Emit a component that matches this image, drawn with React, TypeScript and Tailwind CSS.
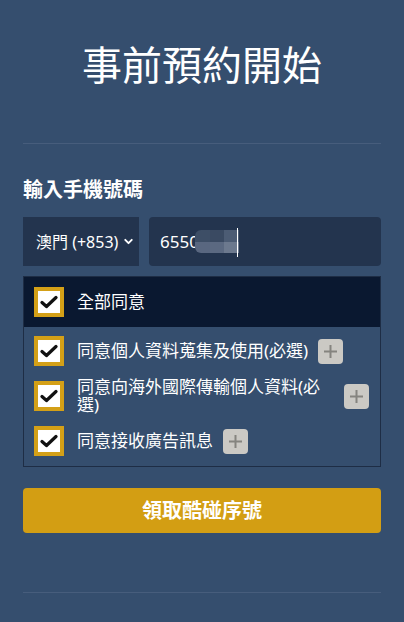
import { ChevronDown } from "lucide-react";

const font = { fontFamily: '"Noto Sans", "Noto Sans CJK TC", sans-serif' };

function CheckBox() {
  return (
    <div className="flex h-[30px] w-[30px] shrink-0 items-center justify-center border-[4px] border-[#d4a017] bg-white">
      <svg width="18" height="14" viewBox="0 0 18 14">
        <path d="M2 7.5 L6.5 11.5 L16 2.5" fill="none" stroke="#111" strokeWidth="3.2" strokeLinecap="round" strokeLinejoin="round" />
      </svg>
    </div>
  );
}

function PlusButton() {
  return (
    <button className="flex h-[25px] w-[25px] shrink-0 items-center justify-center rounded-[4px] bg-[#cbc9c4]">
      <svg width="15" height="15" viewBox="0 0 15 15">
        <path d="M7.5 1 V14 M1 7.5 H14" stroke="#85847f" strokeWidth="2" />
      </svg>
    </button>
  );
}

const items = ["同意個人資料蒐集及使用(必選)", "同意向海外國際傳輸個人資料(必選)", "同意接收廣告訊息"];

export default function App() {
  return (
    <main className="min-h-[622px] w-full bg-[#354e6e] px-[23px] text-white" style={font}>
      <h1 className="pt-[40px] text-center text-[40px] leading-[50px] font-normal">事前預約開始</h1>

      <div className="mt-[53px] h-px bg-[#475d7c]" />

      <h2 className="mt-[32px] text-[20px] leading-[28px] font-bold">輸入手機號碼</h2>

      <div className="mt-[13px] flex gap-[10px]">
        <div className="flex h-[49px] w-[116px] items-center justify-between bg-[#23344e] pr-[4px] pl-[13px] text-[16px]">
          <span>澳門 (+853)</span>
          <ChevronDown size={13} strokeWidth={3.5} />
        </div>
        <div className="relative flex h-[49px] flex-1 items-center rounded-[4px] bg-[#23344e] pl-[11px] text-[17px]">
          <span>6550</span>
          <div className="absolute top-[13px] left-[46px] grid h-[23px] w-[44px] grid-cols-3 grid-rows-2 overflow-hidden rounded-l-[6px]">
            <div className="bg-[#3d4e66]" />
            <div className="bg-[#3a4a62]" />
            <div className="bg-[#4c5c74]" />
            <div className="bg-[#596780]" />
            <div className="bg-[#5b6981]" />
            <div className="bg-[#6c798e]" />
          </div>
          <div className="absolute top-[11px] left-[88px] h-[29px] w-px bg-white" />
        </div>
      </div>

      <div className="mt-[10px] border border-[#1e2d45]">
        <label className="flex h-[50px] items-center gap-[13px] bg-[#0a1830] pl-[10px] text-[17px]">
          <CheckBox />
          <span>全部同意</span>
        </label>
        <div className="flex flex-col gap-[12px] pt-[9px] pr-[11px] pb-[10px] pl-[10px]">
          {items.map((t) => (
            <div key={t} className="flex min-h-[30px] items-center">
              <CheckBox />
              <span className="ml-[13px] text-[17px] leading-[18px]">{t}</span>
              <span className="ml-[10px]">
                <PlusButton />
              </span>
            </div>
          ))}
        </div>
      </div>

      <button className="mt-[21px] flex h-[45px] w-full items-center justify-center rounded-[4px] bg-[#d39e13] text-[20px] font-bold text-white">
        領取酷碰序號
      </button>

      <div className="mt-[59px] h-px bg-[#475d7c]" />
    </main>
  );
}
